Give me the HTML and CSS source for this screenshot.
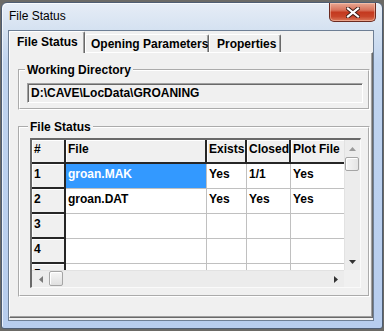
FILE: index.html
```html
<!DOCTYPE html>
<html lang="en">
<head>
  <meta charset="UTF-8">
  <title>File Status</title>
  <link rel="stylesheet" href="styles.css">
</head>
<body>
  <div class="window">
    <div class="titlebar">
      <span class="title">File Status</span>
      <div class="close-btn">
        <svg width="14" height="11" viewBox="0 0 14 11">
          <path d="M2 1.5 L12 9.5 M12 1.5 L2 9.5" stroke="#3a1a14" stroke-width="4" stroke-linecap="square"/>
          <path d="M2 1.5 L12 9.5 M12 1.5 L2 9.5" stroke="#fff" stroke-width="2.2" stroke-linecap="square"/>
        </svg>
      </div>
    </div>

    <div class="client">
      <div class="tabs">
        <div class="tab active">File Status</div>
        <div class="tab tab-params">Opening Parameters</div>
        <div class="tab tab-props">Properties</div>
      </div>

      <div class="tab-panel">
        <fieldset class="group group-dir">
          <legend>Working Directory</legend>
          <div class="field">D:\CAVE\LocData\GROANING</div>
        </fieldset>

        <fieldset class="group group-files">
          <legend>File Status</legend>
          <div class="grid">
            <div class="grid-view">
              <div class="row row-head">
                <div class="cell hdr c-num">#</div>
                <div class="cell hdr c-file">File</div>
                <div class="cell hdr c-exists">Exists</div>
                <div class="cell hdr c-closed">Closed</div>
                <div class="cell hdr c-plot">Plot File</div>
              </div>
              <div class="row">
                <div class="cell hdr c-num">1</div>
                <div class="cell c-file selected">groan.MAK</div>
                <div class="cell c-exists">Yes</div>
                <div class="cell c-closed">1/1</div>
                <div class="cell c-plot">Yes</div>
              </div>
              <div class="row">
                <div class="cell hdr c-num">2</div>
                <div class="cell c-file">groan.DAT</div>
                <div class="cell c-exists">Yes</div>
                <div class="cell c-closed">Yes</div>
                <div class="cell c-plot">Yes</div>
              </div>
              <div class="row">
                <div class="cell hdr c-num">3</div>
                <div class="cell c-file"></div>
                <div class="cell c-exists"></div>
                <div class="cell c-closed"></div>
                <div class="cell c-plot"></div>
              </div>
              <div class="row">
                <div class="cell hdr c-num">4</div>
                <div class="cell c-file"></div>
                <div class="cell c-exists"></div>
                <div class="cell c-closed"></div>
                <div class="cell c-plot"></div>
              </div>
              <div class="row">
                <div class="cell hdr c-num">5</div>
                <div class="cell c-file"></div>
                <div class="cell c-exists"></div>
                <div class="cell c-closed"></div>
                <div class="cell c-plot"></div>
              </div>
            </div>

            <div class="vscroll">
              <div class="arrow">
                <svg width="7" height="4" viewBox="0 0 7 4"><polygon points="3.5,0 7,4 0,4" fill="#9a9a9a"/></svg>
              </div>
              <div class="thumb"></div>
              <div class="track"></div>
              <div class="arrow">
                <svg width="7" height="4" viewBox="0 0 7 4"><polygon points="0,0 7,0 3.5,4" fill="#333"/></svg>
              </div>
            </div>

            <div class="hscroll">
              <div class="arrow">
                <svg width="4" height="7" viewBox="0 0 4 7"><polygon points="4,0 4,7 0,3.5" fill="#7a7a7a"/></svg>
              </div>
              <div class="thumb"></div>
              <div class="track"></div>
              <div class="arrow">
                <svg width="4" height="7" viewBox="0 0 4 7"><polygon points="0,0 4,3.5 0,7" fill="#333"/></svg>
              </div>
            </div>

            <div class="corner"></div>
          </div>
        </fieldset>
      </div>
    </div>
  </div>
</body>
</html>
```

FILE: styles.css
```css
body {
  margin: 0;
  width: 384px;
  height: 331px;
  background: #6b6a66;
  font-family: "Liberation Sans", Arial, sans-serif;
  font-size: 12px;
  color: #000;
  overflow: hidden;
}

.window {
  margin: 2px 1px 0 1px;
  height: 327px;
  box-sizing: border-box;
  border: 1px solid #4e5d73;
  border-radius: 6px 6px 3px 3px;
  background: linear-gradient(180deg, #e6edf6 0px, #d4e1f1 28px, #c0d4ef 60px, #b7cdee 100%);
  box-shadow: inset 1px 1px 0 rgba(255, 255, 255, 0.7);
  padding: 0 8px 7px 6px;
  display: flex;
  flex-direction: column;
}

.titlebar {
  height: 27px;
  display: flex;
  align-items: flex-start;
  justify-content: space-between;
}

.title {
  padding: 6px 0 0 1px;
  font-size: 12px;
  line-height: 15px;
}

.close-btn {
  width: 47px;
  height: 19px;
  margin-right: -2px;
  box-sizing: border-box;
  border: 1px solid #6b2a20;
  border-top: none;
  border-radius: 0 0 5px 5px;
  background: linear-gradient(180deg, #e9a893 0%, #d7715a 40%, #c4391f 52%, #c8452a 75%, #dc7a5c 100%);
  box-shadow: inset 0 0 0 1px rgba(255, 220, 200, 0.45);
  display: flex;
  align-items: center;
  justify-content: center;
}

.client {
  flex: 1;
  background: #f0f0f0;
  border: 1px solid #6e7f95;
  padding: 0 0 2px 0;
  display: flex;
  flex-direction: column;
  font-weight: bold;
}

/* tab strip */

.tabs {
  height: 21px;
  display: flex;
  align-items: flex-end;
}

.tab {
  height: 18px;
  box-sizing: border-box;
  border-top: 1px solid #fff;
  border-left: 1px solid #fff;
  border-right: 1px solid #696969;
  box-shadow: inset -1px 0 0 #a0a0a0;
  border-radius: 2px 2px 0 0;
  padding: 2px 0 0 5px;
  line-height: 14px;
  white-space: nowrap;
  overflow: hidden;
}

.tab.active {
  width: 76px;
  height: 22px;
  margin-bottom: -1px;
  padding: 3px 0 0 7px;
  background: #f0f0f0;
  position: relative;
  z-index: 1;
}

.tab-params {
  width: 124px;
}

.tab-props {
  width: 72px;
  padding-left: 7px;
}

.tab-panel {
  flex: 1;
  border: 1px solid;
  border-color: #fff #696969 #696969 #fff;
  box-shadow: inset -1px -1px 0 #a0a0a0;
  padding: 10px 2px 0 8px;
}

/* group boxes */

.group {
  margin: 0;
  border: 2px groove #fff;
  min-width: 0;
}

.group legend {
  padding: 0 2px;
  margin-left: -2px;
  line-height: 14px;
}

.group-dir {
  padding: 6px 5px 5px 7px;
}

.group-files {
  margin-top: 10px;
  padding: 4px 7px 7px 10px;
}

.field {
  height: 20px;
  box-sizing: border-box;
  border: 1px solid;
  border-color: #a0a0a0 #fff #fff #a0a0a0;
  box-shadow: inset 1px 1px 0 #696969;
  padding: 1px 0 0 3px;
  line-height: 16px;
  background: #f0f0f0;
}

/* data grid */

.grid {
  height: 150px;
  box-sizing: border-box;
  border-style: solid;
  border-width: 2px 1px 1px 2px;
  border-color: #696969 #fafafa #fafafa #696969;
  display: grid;
  grid-template-columns: 1fr 16px;
  grid-template-rows: 1fr 17px;
  background: #fff;
}

.grid-view {
  overflow: hidden;
}

.row {
  display: flex;
  height: 25px;
}

.row-head {
  height: 24px;
}

.cell {
  flex: none;
  box-sizing: border-box;
  height: 100%;
  padding: 3px 0 0 2px;
  line-height: 14px;
  border-right: 1px solid #c0c0c0;
  border-bottom: 1px solid #c0c0c0;
  white-space: nowrap;
  overflow: hidden;
}

.cell.hdr {
  background: #f0f0f0;
  border-right: 2px solid #262626;
  border-bottom: 2px solid #262626;
  box-shadow: inset 1px 1px 0 #fff;
}

.row-head .cell {
  padding-top: 2px;
}

.cell.selected {
  background: #3399ff;
  color: #fff;
}

.c-num { width: 34px; }
.c-file { width: 141px; }
.c-exists { width: 40px; }
.c-closed { width: 44px; }
.c-plot { width: 72px; }

/* scrollbars */

.vscroll,
.hscroll {
  display: flex;
  background: #ececec;
}

.vscroll {
  flex-direction: column;
  border-left: 1px solid #e2e2e2;
}

.hscroll {
  border-top: 1px solid #e2e2e2;
}

.arrow {
  flex: none;
  display: flex;
  align-items: center;
  justify-content: center;
}

.vscroll .arrow {
  height: 17px;
}

.hscroll .arrow {
  width: 17px;
}

.track {
  flex: 1;
}

.thumb {
  flex: none;
  box-sizing: border-box;
  border: 1px solid #a5a5a5;
  border-radius: 2px;
  background: linear-gradient(90deg, #f6f6f6, #e4e4e4);
  box-shadow: inset 1px 1px 0 #fff;
}

.vscroll .thumb {
  height: 14px;
  margin: 0 1px 0 0;
}

.hscroll .thumb {
  width: 14px;
  margin: 0 0 1px 0;
  background: linear-gradient(180deg, #f6f6f6, #e0e0e0);
}

.corner {
  background: #f0f0f0;
}
```
